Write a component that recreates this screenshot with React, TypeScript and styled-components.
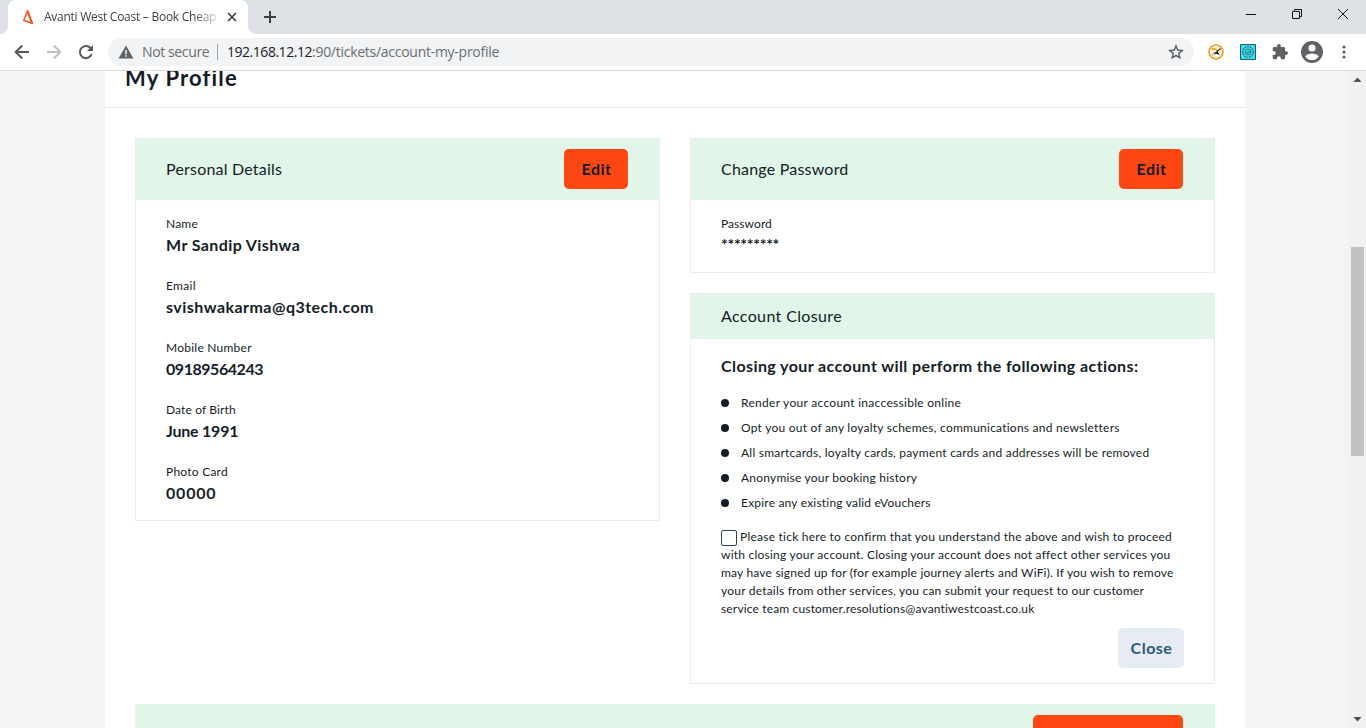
import React from "react";
import styled, { createGlobalStyle } from "styled-components";

const ink = "#141d27";
const line = "#e7edf4";

const GlobalStyle = createGlobalStyle`
  * { box-sizing: border-box; }
  html, body { margin: 0; height: 100%; overflow: hidden; }
  body { font-family: Lato, "Liberation Sans", sans-serif; color: ${ink}; font-variant-ligatures: none; }
  h1, h2, h3, p, ul { margin: 0; padding: 0; font-weight: 400; }
`;

const Window = styled.div`
  width: 1366px;
  height: 728px;
  display: flex;
  flex-direction: column;
  overflow: hidden;
  background: #fff;
`;

/* Browser frame */
const TabStrip = styled.div`
  flex: none;
  height: 34px;
  display: flex;
  background: #dee1e6;
  font-family: "Open Sans", "Noto Sans", sans-serif;
`;
const TabFoot = styled.div<{ $side: "left" | "right" }>`
  width: 8px;
  height: 8px;
  align-self: flex-end;
  background: radial-gradient(circle at ${(p) => (p.$side === "left" ? "0 0" : "100% 0")}, #dee1e6 7.5px, #fff 8.5px);
`;
const Tab = styled.div`
  width: 240px;
  height: 34px;
  display: flex;
  align-items: center;
  padding-left: 14px;
  background: #fff;
  border-radius: 8px 8px 0 0;
`;
const TabTitle = styled.div`
  width: 175px;
  height: 20px;
  margin-left: 8px;
  overflow: hidden;
  white-space: nowrap;
  font-size: 12px;
  line-height: 19px;
  letter-spacing: -0.26px;
  color: #3c4043;
  -webkit-mask-image: linear-gradient(90deg, #000 150px, transparent 178px);
  mask-image: linear-gradient(90deg, #000 150px, transparent 178px);
`;
const TabClose = styled.svg`
  margin-left: 8px;
`;
const NewTab = styled.svg`
  margin: 10px 0 0 8px;
`;
const WindowButtons = styled.div`
  display: flex;
  gap: 34px;
  margin: 8px 17px 0 auto;
  height: 12px;
`;
const Toolbar = styled.div`
  flex: none;
  height: 37px;
  display: flex;
  align-items: center;
  padding: 0 14px 1px 14px;
  border-bottom: 1px solid #d9dbde;
  background: #fff;
`;
const NavIcons = styled.div`
  display: flex;
  gap: 16px;
  width: 94px;
`;
const Omnibox = styled.div`
  width: 1086px;
  height: 28px;
  display: flex;
  align-items: center;
  padding: 0 10px;
  border-radius: 14px;
  background: #f1f3f4;
  font: 14px/28px "Open Sans", "Noto Sans", sans-serif;
`;
const Security = styled.span`
  width: 75px;
  margin-left: 8px;
  letter-spacing: -0.38px;
  color: #6a6e73;
`;
const Separator = styled.i`
  width: 1px;
  height: 16px;
  background: #9aa0a6;
  margin-right: 9px;
`;
const Host = styled.span`
  letter-spacing: -0.47px;
  color: #202124;
`;
const Path = styled.span`
  letter-spacing: -0.27px;
  color: #6a6e73;
`;
const Star = styled.svg`
  margin-left: auto;
`;
const Extensions = styled.div`
  display: flex;
  align-items: center;
  margin-left: 14px;
`;
const Slot = styled.div<{ $w: number }>`
  width: ${(p) => p.$w}px;
  display: flex;
`;

/* Page */
const Viewport = styled.div`
  flex: 1;
  min-height: 0;
  display: flex;
  background: #f4f4f4;
`;
const Page = styled.main`
  width: 1140px;
  margin: 0 104px 0 105px;
  background: #fff;
  overflow: hidden;
`;
const PageHeader = styled.header`
  height: 37px;
  padding-left: 20px;
  border-bottom: 1px solid #e4e6e8;
`;
const Title = styled.h1`
  height: 28px;
  margin-top: -7px;
  font-size: 22px;
  line-height: 28px;
  font-weight: 700;
  letter-spacing: 1.15px;
`;
const TitleClip = styled.div`
  height: 36px;
  display: flow-root;
  overflow: hidden;
`;
const Columns = styled.div`
  display: grid;
  grid-template-columns: 525px 525px;
  column-gap: 30px;
  align-items: start;
  padding: 30px 30px 20px;
`;
const Stack = styled.div`
  display: flex;
  flex-direction: column;
  gap: 20px;
`;
const Card = styled.section<{ $h: number }>`
  height: ${(p) => p.$h}px;
  border: 1px solid ${line};
`;
const CardHeader = styled.div<{ $h: number }>`
  height: ${(p) => p.$h}px;
  display: flex;
  align-items: center;
  justify-content: space-between;
  padding: 0 31px 1px 30px;
  background: #e1f5e8;
`;
const CardTitle = styled.h2<{ $ls: number }>`
  font-size: 16px;
  line-height: 24px;
  padding-bottom: 1px;
  letter-spacing: ${(p) => p.$ls}px;
`;
const Button = styled.button<{ $tone: "primary" | "quiet"; $w: number }>`
  width: ${(p) => p.$w}px;
  height: 40px;
  padding: 0;
  border: 0;
  border-radius: 5px;
  background: ${(p) => (p.$tone === "primary" ? "#ff4713" : "#e6ebf4")};
  color: ${(p) => (p.$tone === "primary" ? ink : "#2a5a78")};
  font: 700 16px/40px Lato, sans-serif;
  letter-spacing: 0.5px;
  text-indent: 1px;
`;
const Fields = styled.div`
  padding: 14px 30px 0;
`;
const Field = styled.div`
  height: 62px;
`;
const Label = styled.div<{ $ls: number }>`
  height: 19px;
  font-size: 12px;
  line-height: 20px;
  letter-spacing: ${(p) => p.$ls}px;
`;
const Value = styled.div<{ $ls: number; $raise?: number }>`
  font-size: 16px;
  line-height: ${(p) => 24 - 2 * (p.$raise ?? 0)}px;
  font-weight: 700;
  letter-spacing: ${(p) => p.$ls}px;
`;
const ClosureBody = styled.div`
  padding: 15px 30px 0;
`;
const ClosureHeading = styled.h3`
  font-size: 16px;
  line-height: 24px;
  font-weight: 700;
  letter-spacing: 0.41px;
  white-space: nowrap;
`;
const Bullets = styled.ul`
  list-style: none;
  margin-top: 12px;
`;
const Bullet = styled.li<{ $ls: number }>`
  display: flex;
  align-items: center;
  height: 25px;
  font-size: 12px;
  letter-spacing: ${(p) => p.$ls}px;
  white-space: nowrap;
  &::before {
    content: "";
    width: 8px;
    height: 8px;
    margin-right: 12px;
    border-radius: 50%;
    background: ${ink};
  }
`;
const Consent = styled.div`
  margin-top: 13px;
`;
const ConsentLine = styled.div<{ $ls: number }>`
  display: flex;
  height: 18px;
  font-size: 12px;
  line-height: 18px;
  letter-spacing: ${(p) => p.$ls}px;
  white-space: nowrap;
`;
const Checkbox = styled.span`
  flex: none;
  width: 16px;
  height: 16px;
  margin: 2px 3px 0 0;
  border: 1px solid #24475f;
  border-radius: 2px;
  background: #fff;
`;
const Actions = styled.div`
  display: flex;
  justify-content: flex-end;
  margin-top: 10px;
`;
const NextCard = styled.section`
  height: 62px;
  margin: 0 30px;
  padding: 11px 32px 0 0;
  display: flex;
  justify-content: flex-end;
  background: #e1f5e8;
`;

const Scrollbar = styled.div`
  width: 17px;
  display: flex;
  flex-direction: column;
  align-items: center;
  background: #f1f1f1;
`;
const ScrollArrow = styled.svg`
  flex: none;
`;
const Thumb = styled.div`
  width: 13px;
  height: 209px;
  margin: 159px 0 auto;
  background: #c1c1c1;
`;

const details: { label: string; labelLs: number; value: string; ls: number }[] = [
  { label: "Name", labelLs: 0.21, value: "Mr Sandip Vishwa", ls: 0.4 },
  { label: "Email", labelLs: 0.3, value: "svishwakarma@q3tech.com", ls: 0.46 },
  { label: "Mobile Number", labelLs: 0.24, value: "09189564243", ls: -0.46 },
  { label: "Date of Birth", labelLs: 0.12, value: "June 1991", ls: -0.22 },
  { label: "Photo Card", labelLs: 0.24, value: "00000", ls: 0.8 },
];
const bullets: [string, number][] = [
  ["Render your account inaccessible online", 0.285],
  ["Opt you out of any loyalty schemes, communications and newsletters", 0.235],
  ["All smartcards, loyalty cards, payment cards and addresses will be removed", 0.232],
  ["Anonymise your booking history", 0.21],
  ["Expire any existing valid eVouchers", 0.2],
];
const consent: [string, number][] = [
  ["Please tick here to confirm that you understand the above and wish to proceed", 0.236],
  ["with closing your account. Closing your account does not affect other services you", 0.23],
  ["may have signed up for (for example journey alerts and WiFi). If you wish to remove", 0.197],
  ["your details from other services, you can submit your request to our customer", 0.21],
  ["service team customer.resolutions@avantiwestcoast.co.uk", 0.16],
];

function BrowserFrame() {
  return (
    <>
      <TabStrip>
        <TabFoot $side="left" />
        <Tab>
          <svg width="14" height="16" viewBox="0 0 14 16" fill="none" stroke="#fb4f23" strokeLinejoin="round">
            <path d="M5.500 1.800 1.800 11.200 10.200 14.400Z" strokeWidth="1.500" />
            <path d="M5.500 1.800 10.200 14.400" strokeWidth="1.900" />
          </svg>
          <TabTitle>Avanti West Coast – Book Cheap</TabTitle>
          <TabClose width="10" height="10" viewBox="0 0 10 10" stroke="#3c4043" strokeWidth="1.7">
            <path d="M1 1 9 9M9 1 1 9" />
          </TabClose>
        </Tab>
        <TabFoot $side="right" />
        <NewTab width="13" height="13" viewBox="0 0 13 13" stroke="#3c4043" strokeWidth="2">
          <path d="M6 1v12M0 7h12" />
        </NewTab>
        <WindowButtons>
          <svg width="12" height="12" viewBox="0 0 12 12" stroke="#111"><path d="M1 6.5h10" /></svg>
          <svg width="12" height="12" viewBox="0 0 12 12" stroke="#111" fill="none">
            <path d="M1.500 3.500h7v7h-7zM3.500 3.500v-2h7v7h-2" />
          </svg>
          <svg width="12" height="12" viewBox="0 0 12 12" stroke="#111"><path d="M1 1 11 11M11 1 1 11" /></svg>
        </WindowButtons>
      </TabStrip>
      <Toolbar>
        <NavIcons>
          <svg width="16" height="16" viewBox="0 0 16 16" fill="none" stroke="#55595e" strokeWidth="2">
            <path d="M15 8H2.200M8.200 1.500 1.700 8l6.500 6.500" />
          </svg>
          <svg width="16" height="16" viewBox="0 0 16 16" fill="none" stroke="#bcbec1" strokeWidth="2">
            <path d="M1 8h12.800M7.800 1.500 14.300 8l-6.500 6.500" />
          </svg>
          <svg width="16" height="16" viewBox="0 0 16 16" fill="none" stroke="#55595e" strokeWidth="2">
            <path d="M13.700 10.200A6.100 6.100 0 1 1 12.600 4L14 5.500" />
            <path d="M15 1v6H9Z" fill="#55595e" stroke="none" />
          </svg>
        </NavIcons>
        <Omnibox>
          <svg width="16" height="16" viewBox="0 0 16 16">
            <path d="M8 1.500 15.500 14.500H.5Z" fill="#5f6368" />
            <path d="M8 6v4.200M8 11.200v1.600" stroke="#f1f3f4" strokeWidth="1.500" />
          </svg>
          <Security>Not secure</Security>
          <Separator />
          <Host>192.168.12.12</Host>
          <Path>:90/tickets/account-my-profile</Path>
          <Star width="16" height="16" viewBox="0 0 16 16" fill="none" stroke="#5f6368" strokeWidth="1.500">
            <path d="m8 2 1.700 4.100 4.500.4-3.400 2.900 1 4.400L8 11.500l-3.800 2.300 1-4.400-3.400-2.900 4.500-.4Z" />
          </Star>
        </Omnibox>
        <Extensions>
          <Slot $w={32}>
            <svg width="16" height="16" viewBox="0 0 16 16">
              <circle cx="8" cy="8" r="7" fill="#fff" stroke="#f9a11b" strokeWidth="1.700" />
              <path d="M3.500 5.200h4.300L9.500 7" fill="none" stroke="#f9a11b" strokeWidth="1.800" />
              <path d="M4 11.500 7 8" stroke="#f6b868" strokeWidth="1.800" />
              <path d="M12.500 4.500 6.500 10" stroke="#222" strokeWidth="1.100" />
              <path d="M6.500 9.500 10 7.800l1.800 3.700-2-1.300Z" fill="#222" />
            </svg>
          </Slot>
          <Slot $w={32}>
            <svg width="16" height="16" viewBox="0 0 16 16" fill="none" stroke="#1b7f8d">
              <path d="M.5.5h15v15H.5z" fill="#45dce8" stroke="#155e6b" />
              <circle cx="8" cy="8" r="5.300" strokeWidth="1.300" strokeDasharray="2 .6" />
              <circle cx="8" cy="8" r="3" />
              <path d="m6.500 8 1.300 1.300L10.500 6.500" strokeWidth="1.100" />
            </svg>
          </Slot>
          <Slot $w={29}>
            <svg width="16" height="16" viewBox="1 1 22 22" fill="#5f6368">
              <path d="M20.500 11H19V7a2 2 0 0 0-2-2h-4V3.500a2.500 2.500 0 0 0-5 0V5H4a2 2 0 0 0-2 2v3.800h1.500a2.700 2.700 0 0 1 0 5.400H2V20a2 2 0 0 0 2 2h3.800v-1.500a2.700 2.700 0 0 1 5.400 0V22H17a2 2 0 0 0 2-2v-4h1.500a2.500 2.500 0 0 0 0-5Z" />
            </svg>
          </Slot>
          <Slot $w={41}>
            <svg width="22" height="22" viewBox="0 0 22 22">
              <circle cx="11" cy="11" r="11" fill="#5f6368" />
              <circle cx="11" cy="7" r="3.500" fill="#fff" />
              <path d="M4.300 15.600C5.500 13.300 8.500 12.600 11 12.600s5.500.7 6.700 3A8.200 8.200 0 0 1 4.300 15.600Z" fill="#fff" />
            </svg>
          </Slot>
          <svg width="4" height="14" viewBox="0 0 4 14" fill="#5f6368">
            <circle cx="2" cy="2" r="1.600" /><circle cx="2" cy="7" r="1.600" /><circle cx="2" cy="12" r="1.600" />
          </svg>
        </Extensions>
      </Toolbar>
    </>
  );
}

export default function App() {
  return (
    <Window>
      <GlobalStyle />
      <BrowserFrame />
      <Viewport>
        <Page>
          <PageHeader>
            <TitleClip><Title>My Profile</Title></TitleClip>
          </PageHeader>
          <Columns>
            <Card $h={383}>
              <CardHeader $h={61}>
                <CardTitle $ls={0.2}>Personal Details</CardTitle>
                <Button $tone="primary" $w={64}>Edit</Button>
              </CardHeader>
              <Fields>
                {details.map((d) => (
                  <Field key={d.label}>
                    <Label $ls={d.labelLs}>{d.label}</Label>
                    <Value $ls={d.ls}>{d.value}</Value>
                  </Field>
                ))}
              </Fields>
            </Card>
            <Stack>
              <Card $h={135}>
                <CardHeader $h={61}>
                  <CardTitle $ls={0.21}>Change Password</CardTitle>
                  <Button $tone="primary" $w={64}>Edit</Button>
                </CardHeader>
                <Fields>
                  <Label $ls={0.06}>Password</Label>
                  <Value $ls={-0.35} $raise={1}>*********</Value>
                </Fields>
              </Card>
              <Card $h={391}>
                <CardHeader $h={45}>
                  <CardTitle $ls={0.36}>Account Closure</CardTitle>
                </CardHeader>
                <ClosureBody>
                  <ClosureHeading>Closing your account will perform the following actions:</ClosureHeading>
                  <Bullets>
                    {bullets.map(([text, ls]) => <Bullet key={text} $ls={ls}>{text}</Bullet>)}
                  </Bullets>
                  <Consent>
                    {consent.map(([text, ls], i) => (
                      <ConsentLine key={text} $ls={ls}>
                        {i === 0 && <Checkbox />}
                        {text}
                      </ConsentLine>
                    ))}
                  </Consent>
                  <Actions>
                    <Button $tone="quiet" $w={66}>Close</Button>
                  </Actions>
                </ClosureBody>
              </Card>
            </Stack>
          </Columns>
          <NextCard>
            <Button $tone="primary" $w={150} aria-label="Edit" />
          </NextCard>
        </Page>
        <Scrollbar>
          <ScrollArrow width="17" height="17" viewBox="0 0 17 17"><path d="M4.500 11h8l-4-4.500Z" fill="#505050" /></ScrollArrow>
          <Thumb />
          <ScrollArrow width="17" height="17" viewBox="0 0 17 17"><path d="M4.500 6h8l-4 4.500Z" fill="#505050" /></ScrollArrow>
        </Scrollbar>
      </Viewport>
    </Window>
  );
}
